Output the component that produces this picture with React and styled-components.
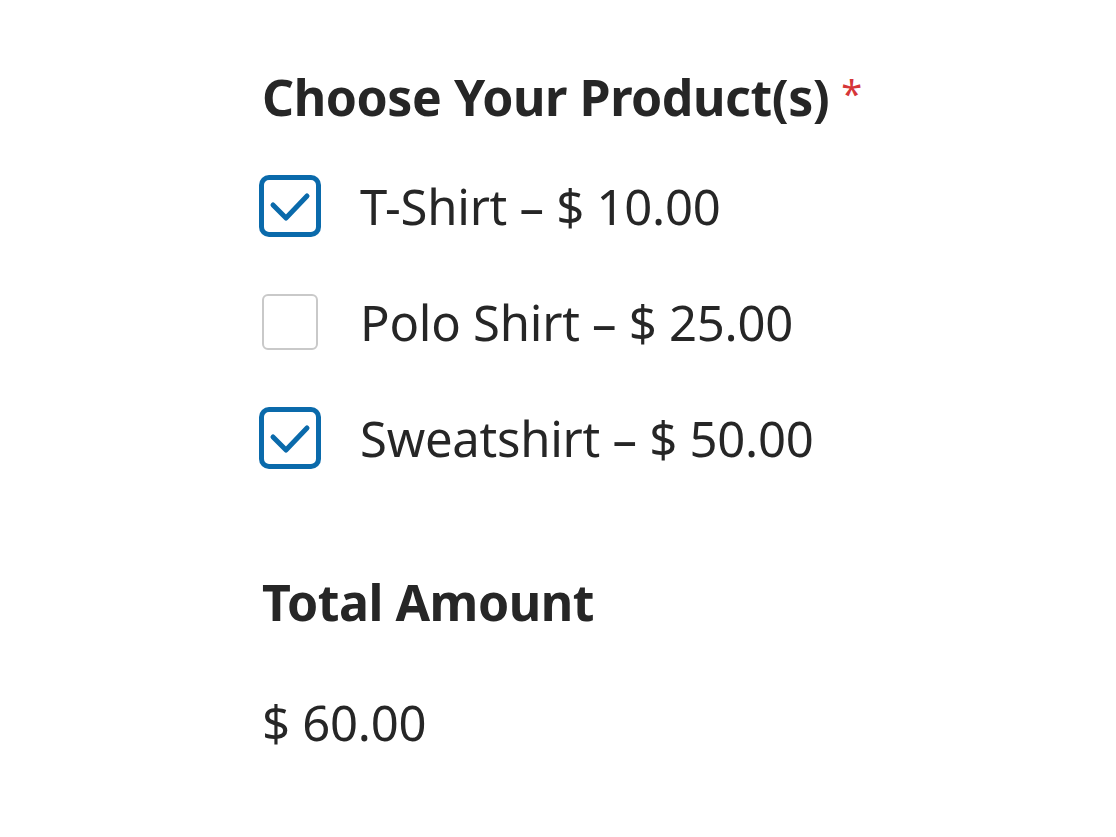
import React from 'react';
import styled, { createGlobalStyle } from 'styled-components';

const GlobalStyle = createGlobalStyle`
  html, body {
    margin: 0;
    padding: 0;
    background: #ffffff;
  }
  body {
    font-family: "Noto Sans", "Open Sans", sans-serif;
    color: #262626;
  }
`;

const Page = styled.div`
  width: 1116px;
  height: 837px;
  box-sizing: border-box;
  padding: 67px 0 0 262px;
  overflow: hidden;
`;

const FieldLabel = styled.div`
  font-size: 50px;
  font-weight: 700;
  letter-spacing: -0.45px;
  line-height: 60px;
  color: #262626;
  margin-top: ${props => props.top || 0}px;
  margin-bottom: ${props => props.gap || 0}px;
`;

const Required = styled.span`
  color: #d63638;
  font-size: 38px;
  font-weight: 400;
  line-height: 0;
  margin-left: 12px;
  vertical-align: 8px;
`;

const Options = styled.ul`
  list-style: none;
  margin: 21px 0 0;
  padding: 0;
`;

const Option = styled.li`
  display: flex;
  align-items: center;
  height: 116px;
`;

const BoxSlot = styled.span`
  flex: 0 0 56px;
  height: 56px;
  margin-right: 42px;
  display: flex;
  align-items: center;
  justify-content: center;
`;

const Box = styled.span`
  box-sizing: border-box;
  width: 56px;
  height: 56px;
  border-radius: ${props => (props.checked ? '7px' : '6px')};
  border: 2px solid ${props => (props.checked ? '#0a6aab' : '#c9c9c9')};
  box-shadow: ${props => (props.checked ? '0 0 0 3px #0a6aab' : 'none')};
  background: #fff;
  display: flex;
  align-items: center;
  justify-content: center;
`;

const OptionText = styled.span`
  font-size: 49px;
  letter-spacing: -0.25px;
  line-height: 60px;
  color: #262626;
`;

const TotalValue = styled.div`
  font-size: 49px;
  letter-spacing: -0.25px;
  line-height: 60px;
  color: #262626;
`;

const products = [
  { name: 'T-Shirt', price: 10, checked: true },
  { name: 'Polo Shirt', price: 25, checked: false },
  { name: 'Sweatshirt', price: 50, checked: true },
];

const Check = () => (
  <svg width="52" height="52" viewBox="0 0 52 52" fill="none">
    <path
      d="M9 25 L22 38 L43 16"
      stroke="#0a6aab"
      strokeWidth="5"
      strokeLinecap="round"
      strokeLinejoin="round"
    />
  </svg>
);

const App = () => {
  const total = products
    .filter(p => p.checked)
    .reduce((sum, p) => sum + p.price, 0);

  return (
    <Page>
      <GlobalStyle />
      <FieldLabel>
        Choose Your Product(s)<Required>*</Required>
      </FieldLabel>
      <Options>
        {products.map(p => (
          <Option key={p.name}>
            <BoxSlot>
              <Box checked={p.checked}>{p.checked && <Check />}</Box>
            </BoxSlot>
            <OptionText>{`${p.name} – $ ${p.price.toFixed(2)}`}</OptionText>
          </Option>
        ))}
      </Options>
      <FieldLabel top={76} gap={60}>
        Total Amount
      </FieldLabel>
      <TotalValue>{`$ ${total.toFixed(2)}`}</TotalValue>
    </Page>
  );
};

export default App;
